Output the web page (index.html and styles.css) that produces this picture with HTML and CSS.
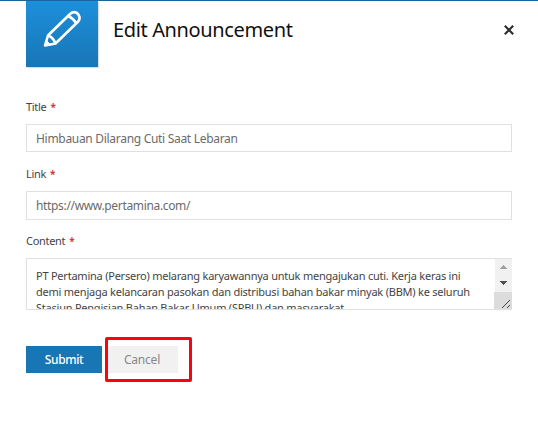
FILE: index.html
```html
<!DOCTYPE html>
<html lang="id">
<head>
<meta charset="utf-8">
<title>Edit Announcement</title>
<link rel="stylesheet" href="styles.css">
</head>
<body>
<header class="header">
  <div class="badge">
    <svg viewBox="0 0 72 67" width="72" height="67" fill="none" stroke="#fff" stroke-width="2.6" stroke-linejoin="round">
      <path d="M19 45.5 L22 35.5 L43.5 14.5 Q47 10.7 51 13 Q55.5 17 52.2 21.5 L29.5 43.5 Z M22 35.5 Q27 37 29.5 43.5 M42 16 Q47 18 50 23"/>
      <path d="M19 45.5 L20.6 40.5 L24 44.5 Z" fill="#fff" stroke-width="1"/>
    </svg>
  </div>
  <h1 class="heading"><span>Edit Announcement</span></h1>
  <button class="close" aria-label="Close">
    <svg viewBox="0 0 10 10" width="10" height="10" fill="none" stroke="#2c2c30" stroke-width="2.1"><path d="M.8 .8 L9.2 9.2 M9.2 .8 L.8 9.2"/></svg>
  </button>
</header>
<main class="form">
  <div class="label"><span>Title</span><b>*</b></div>
  <div class="input"><span class="value-title">Himbauan Dilarang Cuti Saat Lebaran</span></div>
  <div class="label"><span>Link</span><b>*</b></div>
  <div class="input input-link"><span class="value-link">https://www.pertamina.com/</span></div>
  <div class="label"><span>Content</span><b>*</b></div>
  <div class="area">
    <div class="copy">
      <div>PT Pertamina (Persero) melarang karyawannya untuk mengajukan cuti. Kerja keras ini</div>
      <div>demi menjaga kelancaran pasokan dan distribusi bahan bakar minyak (BBM) ke seluruh</div>
      <div>Stasiun Pengisian Bahan Bakar Umum (SPBU) dan masyarakat.</div>
    </div>
    <svg class="scroll" viewBox="0 0 18 52" width="18" height="52" shape-rendering="crispEdges">
      <path fill="#f1f1f1" d="M1 0H18V52H1z"/>
      <path fill="#dcdcdc" d="M0 34H18V52H0z"/>
      <path fill="#a3a3a3" d="M6 11H13L10 7H9z"/>
      <path fill="#505050" d="M6 23H13L10 27H9z"/>
      <path stroke="#444" shape-rendering="auto" d="M8 50L16 42M13 50L16 47"/>
    </svg>
  </div>
  <div class="actions">
    <button class="submit"><span>Submit</span></button>
    <div class="marker"><button class="cancel"><span>Cancel</span></button></div>
  </div>
</main>
</body>
</html>
```
FILE: styles.css
```css
* { box-sizing: border-box; }
body { margin: 0; height: 444px; overflow: hidden; background: #fff; font-family: "Noto Sans", sans-serif; color: #444; border-top: 1px solid #17659c; }
button { border: 0; padding: 0; font: inherit; }
.header { display: flex; height: 66px; padding-left: 26px; }
.badge { width: 72px; height: 66px; background: linear-gradient(#1d8fdc, #1876b5); box-shadow: 1px 1px 1px #ddd; }
.badge svg { display: block; margin-top: -1px; }
.heading { flex: 1; margin: 0 0 0 15px; padding-top: 14px; font-size: 20px; line-height: 30px; font-weight: 400; color: #111; letter-spacing: -.36px; white-space: nowrap; }
.close { width: 10px; height: 10px; margin: 24px 24px 0 0; background: none; }
.close svg { display: block; }
.form { margin: 31px 26px 0; }
.label { display: flex; height: 26px; gap: 4px; font-size: 11px; line-height: 18px; letter-spacing: -.3px; color: #444; }
.label b { color: #d3262b; font-size: 10px; font-weight: 600; }
.input { height: 28px; margin-bottom: 13px; padding-left: 9px; border: 1px solid #e0e0e0; font-size: 12px; line-height: 27px; color: #6b6b6b; white-space: nowrap; }
.input-link { height: 29px; margin-bottom: 12px; }
.value-title { letter-spacing: -.3px; }
.value-link { letter-spacing: -.34px; }
.area { display: flex; height: 52px; border: 1px solid #e0e0e0; border-right: 0; overflow: hidden; }
.copy { flex: 1; padding: 9px 0 0 9px; font-size: 11px; line-height: 16px; color: #444; white-space: nowrap; letter-spacing: -.23px; }
.scroll { flex: none; margin-top: -1px; }
.actions { display: flex; margin-top: 27px; gap: 3px; align-items: flex-start; }
.submit { width: 76px; height: 27px; margin-top: 9px; background: #1876b5; color: #fff; font-size: 12px; font-weight: 500; letter-spacing: -.4px; }
.marker { width: 87px; height: 45px; padding: 6px 0 0; border: 3px solid #ff0010; border-radius: 2px; }
.cancel { display: block; width: 70px; height: 27px; padding-right: 2px; background: #f1f1f1; color: #888; font-size: 12px; letter-spacing: -.2px; }
```
